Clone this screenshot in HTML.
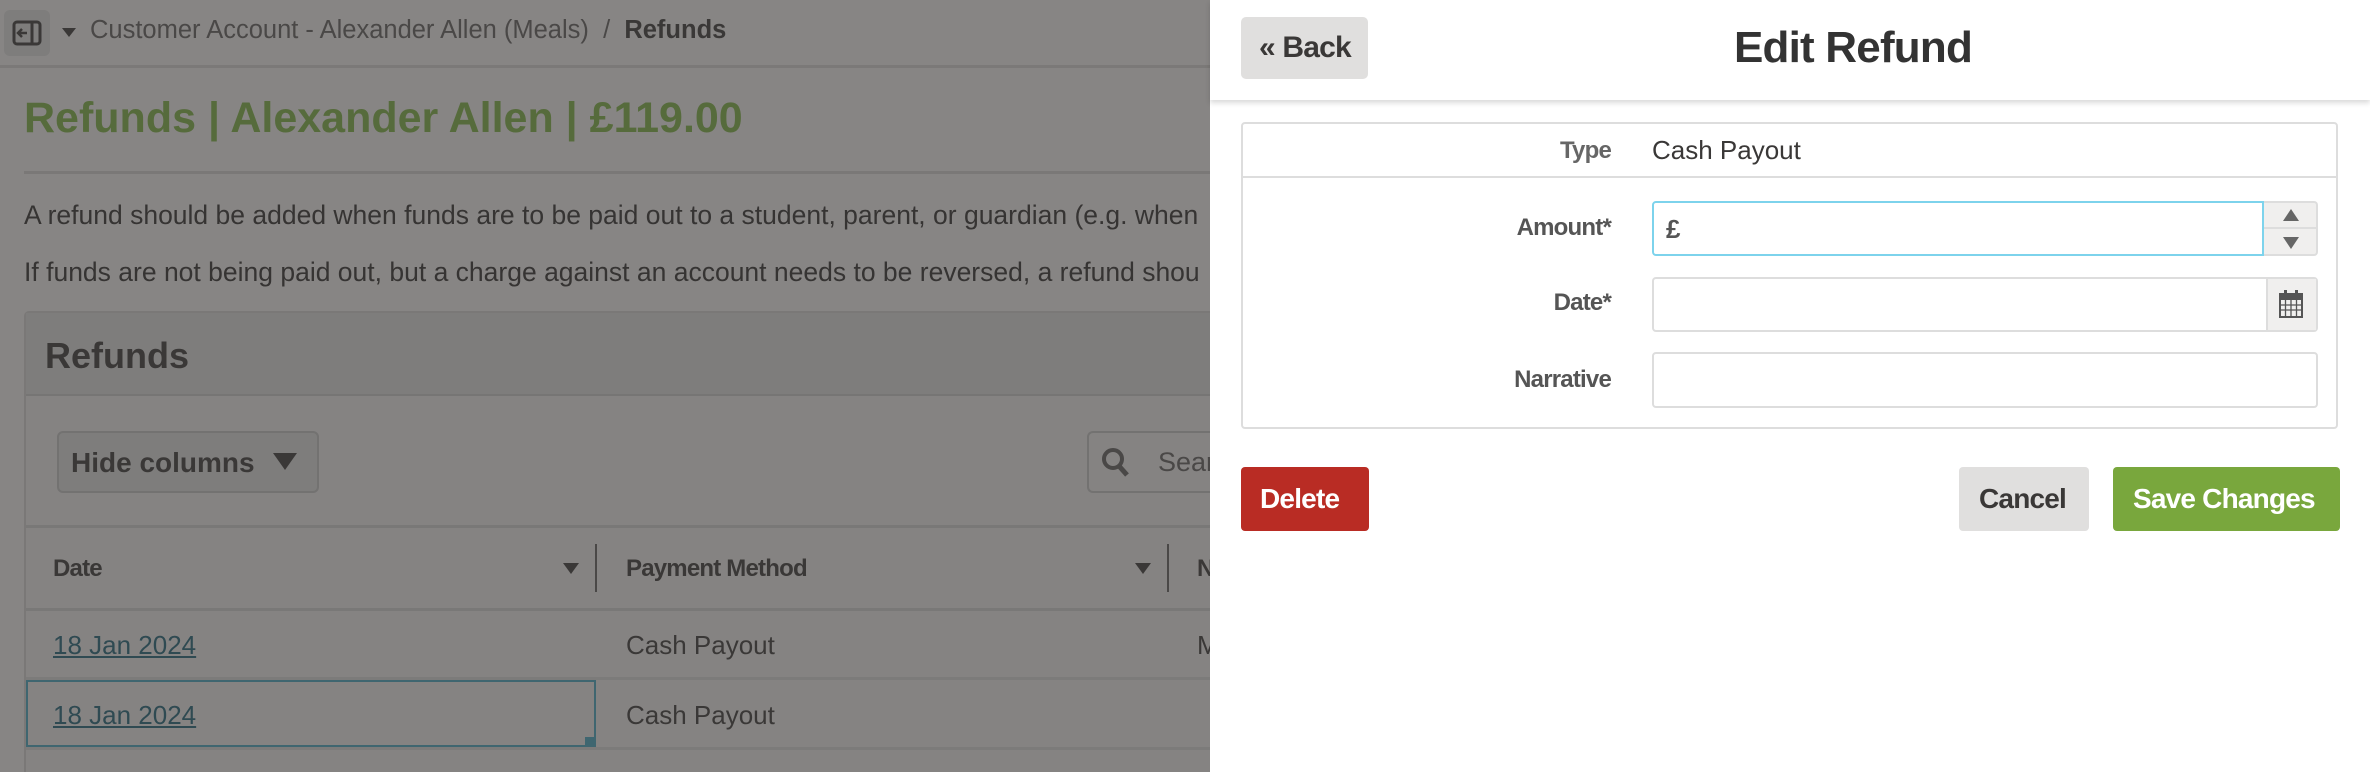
<!DOCTYPE html>
<html><head><meta charset="utf-8"><style>
*{box-sizing:border-box;margin:0;padding:0}
html,body{width:2370px;height:772px;overflow:hidden}
body{position:relative;background:#878584;font-family:"Liberation Sans",sans-serif;color:#3a3837}
.a{position:absolute;white-space:nowrap}
.c{letter-spacing:-0.8px}
.hl{position:absolute;height:3px;background:#7a7877}
</style></head><body>
<!-- left dimmed page -->
<div class="a" style="left:4px;top:10px;width:46px;height:46px;background:#7e7d7c;border-radius:6px"></div>
<svg class="a" style="left:12px;top:20px" width="30" height="26" viewBox="0 0 30 26"><rect x="2" y="2" width="26" height="22" rx="3" fill="none" stroke="#3a3837" stroke-width="3"/><line x1="20" y1="3" x2="20" y2="23" stroke="#3a3837" stroke-width="3"/><path d="M6 13h9M10 9l-4 4 4 4" fill="none" stroke="#3a3837" stroke-width="2.5"/></svg>
<svg class="a" style="left:62px;top:28px" width="14" height="10"><path d="M0 0h14L7 9z" fill="#3a3837"/></svg>
<div class="a" style="left:90px;top:16px;font-size:25.5px;color:#4a4847">Customer Account - Alexander Allen (Meals) &nbsp;/ &nbsp;<b style="color:#3a3837">Refunds</b></div>
<div class="hl" style="left:0;top:65px;width:1210px;background:#7b7978"></div>
<div class="a" style="left:24px;top:94px;font-size:43px;font-weight:bold;color:#566b3c">Refunds | Alexander Allen | £119.00</div>
<div class="hl" style="left:24px;top:171px;width:1186px"></div>
<div class="a" style="left:24px;top:200px;font-size:26.5px;color:#363433">A refund should be added when funds are to be paid out to a student, parent, or guardian (e.g. when</div>
<div class="a" style="left:24px;top:257px;font-size:26.5px;color:#363433">If funds are not being paid out, but a charge against an account needs to be reversed, a refund shou</div>
<div class="a" style="left:24px;top:311px;width:1200px;height:461px;background:#858382;border:2px solid #7a7877;border-bottom:none;border-radius:5px 5px 0 0"></div>
<div class="a" style="left:26px;top:313px;width:1190px;height:83px;background:#7e7d7c;border-bottom:2px solid #767574"></div>
<div class="a" style="left:45px;top:335px;font-size:36px;font-weight:bold">Refunds</div>
<div class="a" style="left:57px;top:431px;width:262px;height:62px;background:#7e7d7c;border:2px solid #737271;border-radius:6px"></div>
<div class="a" style="left:71px;top:447px;font-size:28px;font-weight:bold">Hide columns</div>
<svg class="a" style="left:273px;top:453px" width="24" height="18"><path d="M0 0h24L12 17z" fill="#3a3837"/></svg>
<div class="a" style="left:1087px;top:431px;width:140px;height:62px;border:2px solid #737271;border-radius:6px 0 0 6px;border-right:none"></div>
<svg class="a" style="left:1101px;top:447px" width="30" height="32"><circle cx="12" cy="12" r="9" fill="none" stroke="#4a4847" stroke-width="4"/><path d="M18 19l8 9" stroke="#4a4847" stroke-width="5"/></svg>
<div class="a" style="left:1158px;top:447px;font-size:27px;color:#4a4847">Sear</div>
<div class="hl" style="left:26px;top:525px;width:1190px;background:#797877"></div>
<div class="a c" style="left:53px;top:555px;font-size:24px;font-weight:bold">Date</div>
<svg class="a" style="left:563px;top:563px" width="16" height="12"><path d="M0 0h16L8 11z" fill="#3a3837"/></svg>
<div class="a" style="left:595px;top:544px;width:2px;height:48px;background:#4a4847"></div>
<div class="a c" style="left:626px;top:555px;font-size:24px;font-weight:bold">Payment Method</div>
<svg class="a" style="left:1135px;top:563px" width="16" height="12"><path d="M0 0h16L8 11z" fill="#3a3837"/></svg>
<div class="a" style="left:1167px;top:544px;width:2px;height:48px;background:#4a4847"></div>
<div class="a" style="left:1197px;top:555px;font-size:24px;font-weight:bold">N</div>
<div class="hl" style="left:26px;top:608px;width:1190px;background:#797877"></div>
<div class="a" style="left:53px;top:630px;font-size:26px;color:#2f4a52;text-decoration:underline">18 Jan 2024</div>
<div class="a" style="left:626px;top:630px;font-size:26px">Cash Payout</div>
<div class="a" style="left:1197px;top:630px;font-size:26px">M</div>
<div class="hl" style="left:26px;top:677px;width:1190px;background:#7c7b7a"></div>
<div class="a" style="left:26px;top:680px;width:570px;height:67px;border:2px solid #3f6670"></div>
<div class="a" style="left:585px;top:737px;width:10px;height:10px;background:#3f6670"></div>
<div class="a" style="left:53px;top:700px;font-size:26px;color:#2f4a52;text-decoration:underline">18 Jan 2024</div>
<div class="a" style="left:626px;top:700px;font-size:26px">Cash Payout</div>
<div class="hl" style="left:26px;top:747px;width:1190px;background:#7c7b7a"></div>

<!-- right panel -->
<div class="a" style="left:1210px;top:0;width:1160px;height:772px;background:#fff"></div>
<div class="a" style="left:1210px;top:0;width:1160px;height:100px;background:#fff;box-shadow:0 3px 5px rgba(0,0,0,0.15)"></div>
<div class="a" style="left:1241px;top:17px;width:127px;height:62px;background:#e0dfde;border-radius:5px"></div>
<div class="a c" style="left:1259px;top:31px;font-size:30px;font-weight:bold;color:#3a3837">« Back</div>
<div class="a c" style="left:1853px;top:23px;transform:translateX(-50%);font-size:44px;font-weight:bold;color:#333">Edit Refund</div>
<div class="a" style="left:1241px;top:122px;width:1097px;height:307px;border:2px solid #ddd;border-radius:4px"></div>
<div class="a" style="left:1243px;top:176px;width:1093px;height:2px;background:#ddd"></div>
<div class="a c" style="right:759px;top:137px;font-size:24px;font-weight:bold;color:#666">Type</div>
<div class="a" style="left:1652px;top:135px;font-size:26px;color:#3a3837">Cash Payout</div>
<div class="a c" style="right:759px;top:214px;font-size:24px;font-weight:bold;color:#555">Amount*</div>
<div class="a" style="left:1652px;top:201px;width:612px;height:55px;border:2px solid #7dd3ec;border-radius:4px 0 0 4px"></div>
<div class="a" style="left:1666px;top:214px;font-size:26px;font-weight:bold;color:#555">£</div>
<div class="a" style="left:2264px;top:201px;width:54px;height:55px;background:#f0efee;border:2px solid #ddd;border-left:none;border-radius:0 4px 4px 0"></div>
<div class="a" style="left:2264px;top:227px;width:52px;height:2px;background:#ddd"></div>
<svg class="a" style="left:2282px;top:208px" width="18" height="42"><path d="M9 1l8 12H1z M1 29h16L9 41z" fill="#666"/></svg>
<div class="a c" style="right:759px;top:289px;font-size:24px;font-weight:bold;color:#555">Date*</div>
<div class="a" style="left:1652px;top:277px;width:666px;height:55px;border:2px solid #ddd;border-radius:4px"></div>
<div class="a" style="left:2266px;top:279px;width:50px;height:51px;background:#f0efee;border-left:2px solid #ddd"></div>
<svg class="a" style="left:2279px;top:290px" width="24" height="28" viewBox="0 0 24 28"><rect x="1" y="4" width="22" height="23" fill="none" stroke="#555" stroke-width="2"/><rect x="1" y="4" width="22" height="6" fill="#555"/><rect x="5" y="0" width="3" height="7" fill="#555"/><rect x="16" y="0" width="3" height="7" fill="#555"/><path d="M1 15h22M1 20h22M6.5 10v17M12 10v17M17.5 10v17" stroke="#555" stroke-width="1.3"/></svg>
<div class="a c" style="right:759px;top:366px;font-size:24px;font-weight:bold;color:#555">Narrative</div>
<div class="a" style="left:1652px;top:352px;width:666px;height:56px;border:2px solid #ddd;border-radius:4px"></div>
<div class="a" style="left:1241px;top:467px;width:128px;height:64px;background:#b92c24;border-radius:4px"></div>
<div class="a c" style="left:1260px;top:483px;font-size:28px;font-weight:bold;color:#fff">Delete</div>
<div class="a" style="left:1959px;top:467px;width:130px;height:64px;background:#e0dfde;border-radius:4px"></div>
<div class="a c" style="left:1979px;top:483px;font-size:28px;font-weight:bold;color:#3a3837">Cancel</div>
<div class="a" style="left:2113px;top:467px;width:227px;height:64px;background:#79a73d;border-radius:4px"></div>
<div class="a c" style="left:2133px;top:483px;font-size:28px;font-weight:bold;color:#fff">Save Changes</div>
</body></html>
